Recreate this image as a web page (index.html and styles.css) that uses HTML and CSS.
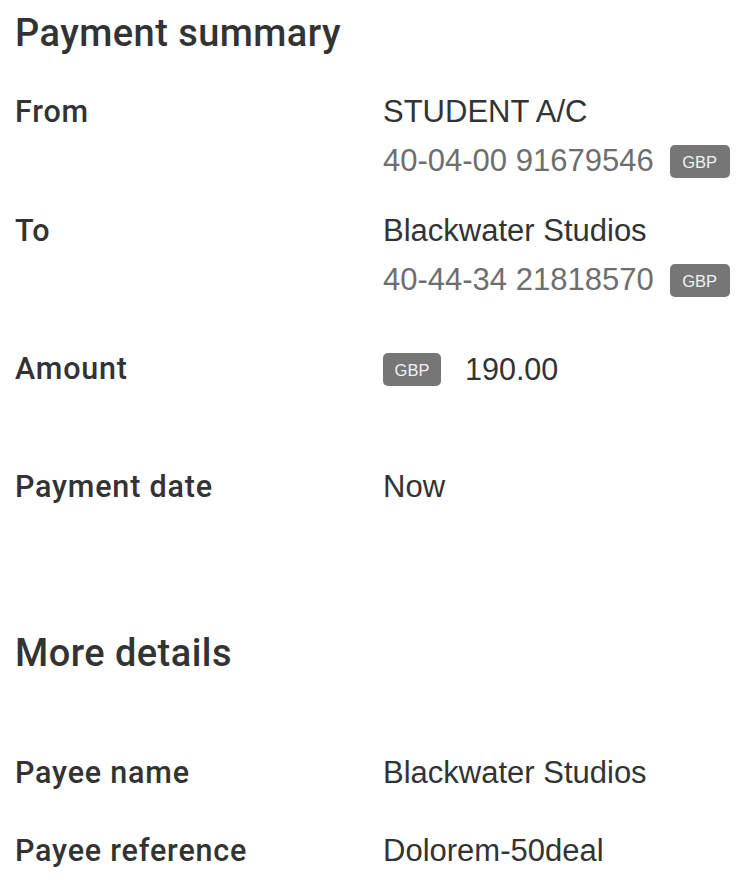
FILE: index.html
```html
<!DOCTYPE html>
<html lang="en">
<head>
<meta charset="utf-8">
<title>Payment summary</title>
<link rel="stylesheet" href="styles.css">
</head>
<body>
<main class="page">
  <h1 class="heading heading-first">Payment summary</h1>
  <dl class="details">
    <div class="row row-from">
      <dt class="label">From</dt>
      <dd class="value">
        <div class="line">STUDENT A/C</div>
        <div class="line sub">40-04-00 91679546 <span class="badge">GBP</span></div>
      </dd>
    </div>
    <div class="row row-to">
      <dt class="label">To</dt>
      <dd class="value">
        <div class="line">Blackwater Studios</div>
        <div class="line sub">40-44-34 21818570 <span class="badge">GBP</span></div>
      </dd>
    </div>
    <div class="row row-amount">
      <dt class="label">Amount</dt>
      <dd class="value">
        <div class="line amount"><span class="badge">GBP</span><span class="amount-num">190.00</span></div>
      </dd>
    </div>
    <div class="row row-date">
      <dt class="label">Payment date</dt>
      <dd class="value"><div class="line">Now</div></dd>
    </div>
  </dl>
  <h2 class="heading heading-more">More details</h2>
  <dl class="details">
    <div class="row row-payee">
      <dt class="label">Payee name</dt>
      <dd class="value"><div class="line">Blackwater Studios</div></dd>
    </div>
    <div class="row row-ref">
      <dt class="label">Payee reference</dt>
      <dd class="value"><div class="line">Dolorem-50deal</div></dd>
    </div>
  </dl>
</main>
</body>
</html>
```

FILE: styles.css
```css
html, body {
  margin: 0;
  padding: 0;
  background: #ffffff;
}
body {
  font-family: "Liberation Sans", Arial, sans-serif;
  color: #333333;
}
.page {
  padding: 0 15px;
}
.heading {
  margin: 0;
  font-family: Roboto, "Liberation Sans", sans-serif;
  font-size: 38px;
  line-height: 44px;
  font-weight: 500;
  letter-spacing: 0.45px;
  color: #333333;
}
.heading-first {
  margin-top: 11px;
}
.heading-more {
  margin-top: 120px;
}
.details {
  margin: 0;
}
.row {
  display: grid;
  grid-template-columns: 368px 1fr;
}
.row-from { margin-top: 33px; }
.row-to { margin-top: 22px; }
.row-amount { margin-top: 41px; }
.row-date { margin-top: 70px; }
.row-payee { margin-top: 74px; }
.row-ref { margin-top: 30px; }
.label {
  margin: 0;
  font-family: Roboto, "Liberation Sans", sans-serif;
  font-size: 30.5px;
  line-height: 48px;
  font-weight: 500;
  letter-spacing: 0.8px;
  color: #333333;
}
.value {
  margin: 0;
  font-size: 31px;
  line-height: 48px;
  color: #333333;
}
.line {
  display: flex;
  align-items: center;
  height: 48px;
  white-space: nowrap;
}
.sub {
  color: #6e6e6e;
  font-size: 31px;
  gap: 16px;
  margin-top: 1px;
}
.badge {
  display: inline-flex;
  align-items: center;
  justify-content: center;
  box-sizing: border-box;
  width: 60px;
  height: 33px;
  padding-top: 2px;
  border-radius: 5px;
  background: #767676;
  color: #f2f2f2;
  font-size: 16.5px;
  line-height: 1;
}
.amount .badge {
  width: 58px;
}
.amount-num {
  margin-left: 24px;
  font-size: 30.5px;
}
```
